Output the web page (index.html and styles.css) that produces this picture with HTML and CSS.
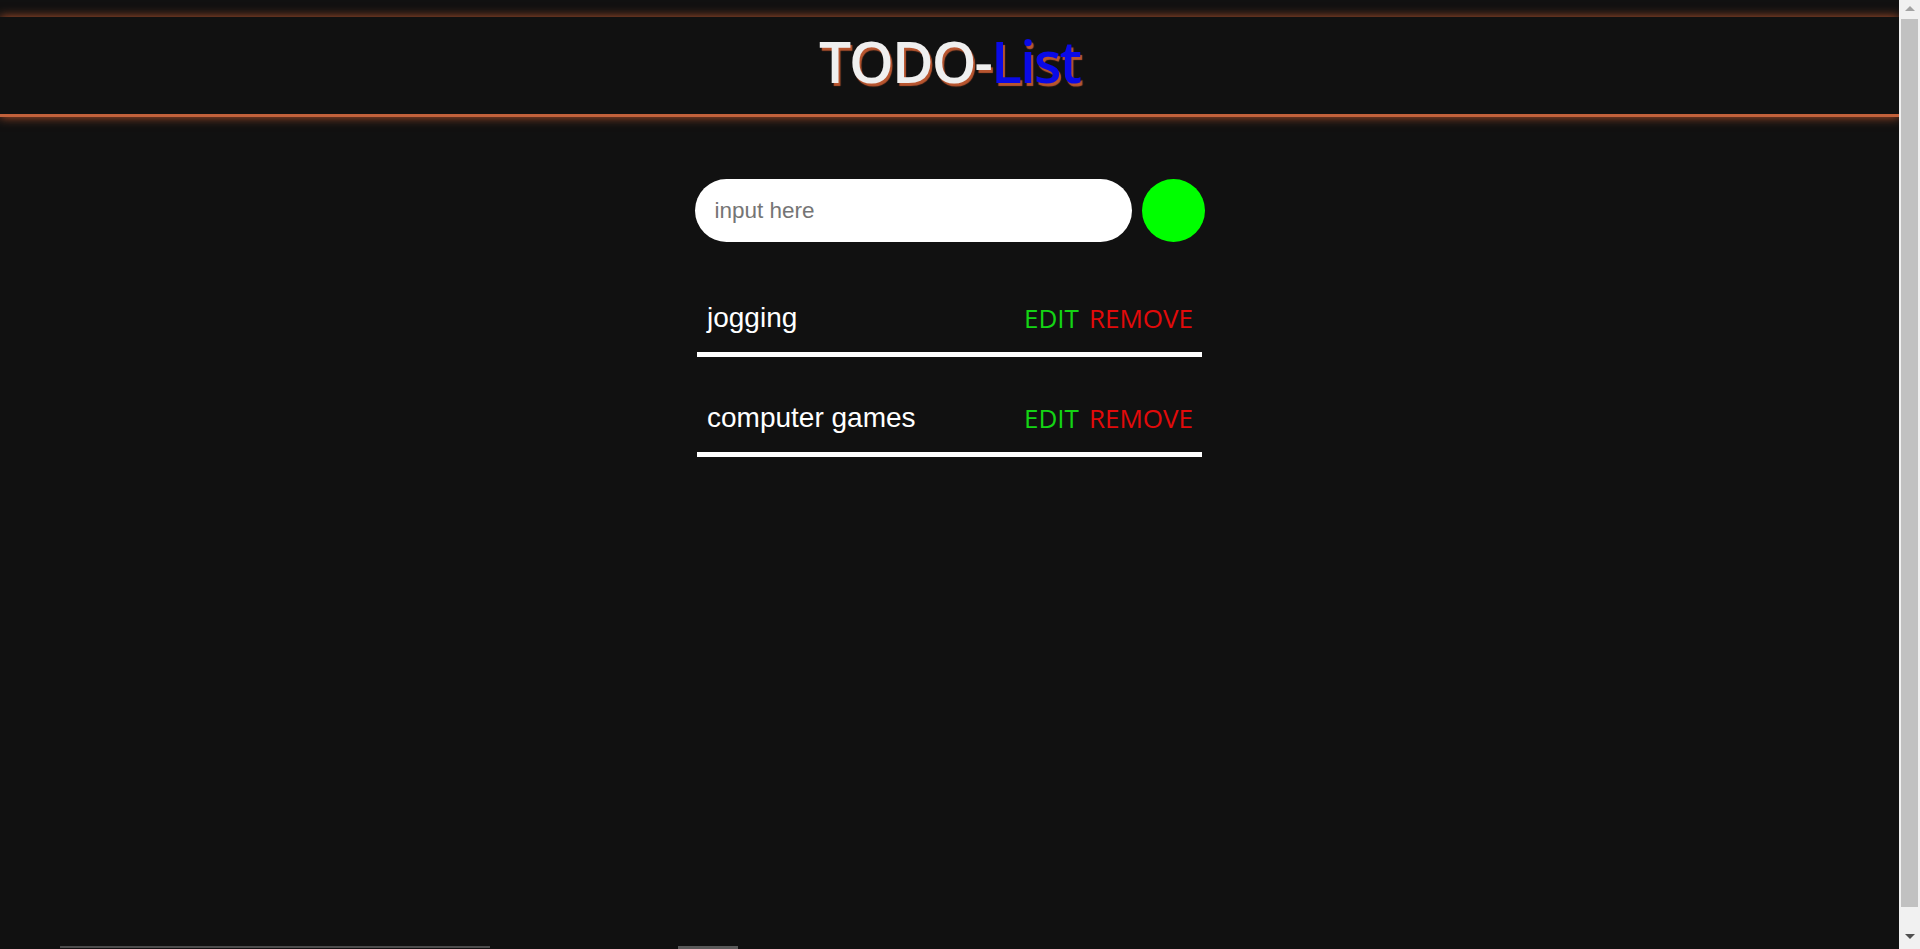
FILE: index.html
```html
<!DOCTYPE html>
<html lang="en">
<head>
<meta charset="utf-8">
<title>TODO-List</title>
<link rel="stylesheet" href="styles.css">
</head>
<body>
<div class="page">
  <div class="main">
    <header class="header">
      <h1 class="title">TODO-<span class="title-blue">List</span></h1>
    </header>
    <form class="add-form">
      <input class="add-input" type="text" placeholder="input here">
      <button class="add-btn" type="button" aria-label="add"></button>
    </form>
    <ul class="list">
      <li class="item">
        <span class="item-text">jogging</span>
        <span class="actions"><span class="edit">EDIT</span><span class="remove">REMOVE</span></span>
      </li>
      <li class="item">
        <span class="item-text">computer games</span>
        <span class="actions"><span class="edit">EDIT</span><span class="remove">REMOVE</span></span>
      </li>
    </ul>
    <div class="bottom-strip"><span class="seg seg-a"></span><span class="seg seg-b"></span></div>
  </div>
  <div class="scrollbar">
    <div class="sb-btn"><span class="arrow-up"></span></div>
    <div class="sb-thumb"></div>
    <div class="sb-space"></div>
    <div class="sb-btn sb-btn-down"><span class="arrow-down"></span></div>
  </div>
</div>
</body>
</html>
```
FILE: styles.css
```css
html, body {
  margin: 0;
  padding: 0;
  background: #111111;
}

.page {
  display: grid;
  grid-template-columns: 1fr 21px;
  height: 949px;
  overflow: hidden;
}

.main {
  display: flex;
  flex-direction: column;
  min-width: 0;
}

.header {
  margin-top: 17px;
  height: 97px;
  border-bottom: 3px solid #c2613b;
  box-shadow: 0 0 10px #b9542e;
  display: flex;
  justify-content: center;
  align-items: center;
  background: #111111;
}

.title {
  margin: 0;
  padding-bottom: 8px;
  font-family: "Open Sans", "Noto Sans", sans-serif;
  font-weight: 600;
  font-size: 57px;
  letter-spacing: -2px;
  line-height: 1;
  color: #efefef;
  text-shadow: 2px 3px 1px #b8552f;
}

.title-blue {
  color: #0a0ae6;
}

.add-form {
  display: flex;
  justify-content: center;
  gap: 10px;
  margin: 62px 0 0 0;
}

.add-input {
  width: 437px;
  height: 63px;
  box-sizing: border-box;
  border: none;
  border-radius: 32px;
  padding: 0 20px;
  background: #ffffff;
  font-family: "Liberation Sans", Arial, sans-serif;
  font-size: 22.5px;
  color: #222;
  outline: none;
}

.add-input::placeholder {
  color: #757575;
}

.add-btn {
  width: 63px;
  height: 63px;
  border: none;
  border-radius: 50%;
  background: #00ff00;
  padding: 0;
}

.list {
  list-style: none;
  width: 505px;
  margin: 15px auto 0;
  padding: 0;
}

.item {
  display: flex;
  justify-content: space-between;
  align-items: center;
  padding: 45px 9px 18px 10px;
  line-height: 32px;
  border-bottom: 5px solid #ffffff;
}

.item-text {
  font-family: "Liberation Sans", Arial, sans-serif;
  font-size: 28px;
  color: #ffffff;
}

.actions {
  display: flex;
  gap: 10px;
  font-family: "Open Sans", "Noto Sans", sans-serif;
  font-size: 26px;
}

.edit {
  color: #14d414;
}

.remove {
  color: #e20a0a;
}

.bottom-strip {
  margin-top: auto;
  height: 3px;
  display: flex;
  align-items: flex-start;
}

.seg {
  display: block;
  height: 2px;
  background: #4d4d4d;
}

.seg-a {
  margin-left: 60px;
  width: 430px;
}

.seg-b {
  margin-left: 188px;
  width: 60px;
  height: 3px;
  background: #5a5a5a;
}

.scrollbar {
  background: #f1f1f1;
  display: flex;
  flex-direction: column;
  align-items: center;
}

.sb-btn {
  height: 17px;
  width: 100%;
  display: flex;
  justify-content: center;
  align-items: center;
}

.sb-btn-down {
  height: 26px;
  align-items: center;
}

.arrow-up {
  width: 0;
  height: 0;
  border-left: 5px solid transparent;
  border-right: 5px solid transparent;
  border-bottom: 5px solid #a3a3a3;
}

.arrow-down {
  width: 0;
  height: 0;
  border-left: 5px solid transparent;
  border-right: 5px solid transparent;
  border-top: 5px solid #505050;
}

.sb-thumb {
  margin-top: 2px;
  width: 17px;
  height: 888px;
  background: #c1c1c1;
}

.sb-space {
  flex: 1;
}
```
